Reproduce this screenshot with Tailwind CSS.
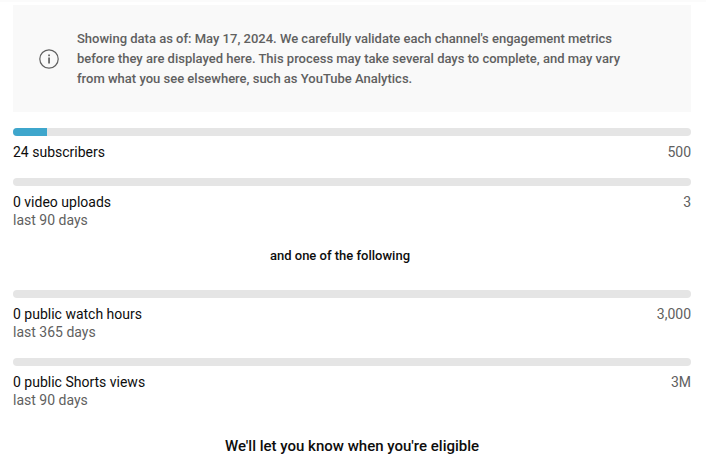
<!DOCTYPE html>
<html><head><script src="https://cdn.jsdelivr.net/npm/@tailwindcss/browser@4"></script></head>
<body class="bg-white font-['Roboto',sans-serif] w-[706px] h-[465px] overflow-hidden">
<div class="h-[2px] bg-[#fbfbfb]"></div>
<div class="pl-[13px] pr-[15px] pt-[3px]">
<div class="bg-[#f9f9f9] h-[107px] flex items-center pl-[26px] pr-[60px]">
<svg class="w-5 h-5 shrink-0 mr-[18px]" viewBox="0 0 20 20" fill="none"><circle cx="10" cy="10" r="9.2" stroke="#606060" stroke-width="1.2"/><rect x="9.2" y="8.5" width="1.7" height="6" fill="#606060"/><rect x="9.2" y="5.5" width="1.7" height="1.7" fill="#606060"/></svg>
<p class="text-[13px] font-medium leading-[20px] text-[#606060]">Showing data as of: May 17, 2024. We carefully validate each channel's engagement metrics before they are displayed here. This process may take several days to complete, and may vary from what you see elsewhere, such as YouTube Analytics.</p>
</div>
<div class="mt-4 h-2 rounded-full bg-[#e5e5e5] overflow-hidden"><div class="h-full w-[34px] bg-[#3ea6cc]"></div></div>
<div class="mt-[7px] flex justify-between text-sm leading-[18px] text-[#0d0d0d]"><span>24 subscribers</span><span class="text-[#606060]">500</span></div>
<div class="mt-[17px] h-2 rounded-full bg-[#e5e5e5]"></div>
<div class="mt-[7px] flex justify-between text-sm leading-[18px] text-[#0d0d0d]"><div>0 video uploads<div class="text-[#606060]">last 90 days</div></div><span class="text-[#606060]">3</span></div>
<p class="mt-[18px] pr-[24px] text-center text-[13px] font-medium leading-[18px] text-[#0d0d0d]">and one of the following</p>
<div class="mt-[25px] h-2 rounded-full bg-[#e5e5e5]"></div>
<div class="mt-[7px] flex justify-between text-sm leading-[18px] text-[#0d0d0d]"><div>0 public watch hours<div class="text-[#606060]">last 365 days</div></div><span class="text-[#606060]">3,000</span></div>
<div class="mt-[17px] h-2 rounded-full bg-[#e5e5e5]"></div>
<div class="mt-[7px] flex justify-between text-sm leading-[18px] text-[#0d0d0d]"><div>0 public Shorts views<div class="text-[#606060]">last 90 days</div></div><span class="text-[#606060]">3M</span></div>
<p class="mt-[27px] text-center text-[15px] font-medium leading-[20px] text-[#0d0d0d]">We'll let you know when you're eligible</p>
</div>
</body></html>
